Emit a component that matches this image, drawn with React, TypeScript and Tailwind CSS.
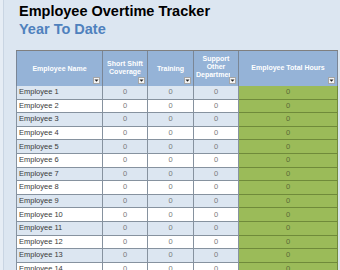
import React from "react";

const cols = [
  { w: "w-[87px]" },
  { w: "w-[45px]" },
  { w: "w-[46px]" },
  { w: "w-[45px]" },
  { w: "w-[99px]" },
];

function Drop() {
  return (
    <div className="absolute right-[2px] bottom-[2px] w-[7px] h-[7px] bg-[#f4f4f4] border border-[#a6a6a6] flex items-center justify-center">
      <svg width="5" height="3" viewBox="0 0 5 3">
        <polygon points="0.5,0.5 4.5,0.5 2.5,2.8" fill="#222" />
      </svg>
    </div>
  );
}

export default function App() {
  const rows = Array.from({ length: 14 }, (_, i) => i + 1);
  return (
    <div
      className="w-[340px] h-[270px] overflow-hidden bg-[#dce6f1] flex"
      style={{ fontFamily: '"Liberation Sans", Arial, sans-serif' }}
    >
      <div className="w-[4px] h-full bg-[#e6edf5] border-r border-[#c9d5e3]" />
      <div className="flex-1 flex flex-col pl-[12px] pt-[2px]">
        <div className="pl-[3px] text-[14.5px] leading-[18px] font-bold text-black whitespace-nowrap">
          Employee Overtime Tracker
        </div>
        <div className="pl-[3px] text-[14.5px] leading-[18px] font-bold text-[#4f81bd] whitespace-nowrap">
          Year To Date
        </div>
        <div className="mt-[12px] w-[322px] flex flex-col">
          {/* header */}
          <div className="flex h-[36px] border-t border-[#7f7f7f] bg-[#95b3d7] text-white font-bold text-[7px] leading-[8px]">
            <div className={`${cols[0].w} relative flex items-center justify-center border-r border-[#7a8696] border-l`}>
              Employee Name
              <Drop />
            </div>
            <div className={`${cols[1].w} relative flex flex-col items-center justify-center border-r border-[#7a8696] text-center pb-[1px]`}>
              <span>Short Shift</span>
              <span>Coverage</span>
              <Drop />
            </div>
            <div className={`${cols[2].w} relative flex items-center justify-center border-r border-[#7a8696]`}>
              Training
              <Drop />
            </div>
            <div className={`${cols[3].w} relative flex flex-col items-center justify-center border-r border-[#7a8696] overflow-hidden pb-[3px]`}>
              <span>Support</span>
              <span>Other</span>
              <span className="self-start ml-[2px] w-[34px] overflow-hidden whitespace-nowrap">Departments</span>
              <Drop />
            </div>
            <div className={`${cols[4].w} relative flex items-center justify-center border-r border-[#7a8696] pb-[1px]`}>
              Employee Total Hours
              <Drop />
            </div>
          </div>
          {rows.map((n) => {
            const odd = n % 2 === 1;
            const bg = odd ? "bg-[#dce6f1]" : "bg-white";
            return (
              <div key={n} className="flex h-[13.6px] text-[7.5px] leading-[12px]">
                <div className={`${cols[0].w} ${bg} border-l border-b border-r border-[#86929f] pl-[2px] text-[#3a3a3a] flex items-center whitespace-nowrap`}>
                  Employee {n}
                </div>
                <div className={`${cols[1].w} ${bg} border-b border-r border-[#86929f] text-[#7a7a7a] flex items-center justify-center`}>
                  0
                </div>
                <div className={`${cols[2].w} ${bg} border-b border-r border-[#86929f] text-[#7a7a7a] flex items-center justify-center`}>
                  0
                </div>
                <div className={`${cols[3].w} ${bg} border-b border-r border-[#86929f] text-[#7a7a7a] flex items-center justify-center`}>
                  0
                </div>
                <div className={`${cols[4].w} bg-[#9bbb59] border-b border-r border-[#6f8a3a] text-[#5a6b38] flex items-center justify-center`}>
                  0
                </div>
              </div>
            );
          })}
        </div>
      </div>
    </div>
  );
}
